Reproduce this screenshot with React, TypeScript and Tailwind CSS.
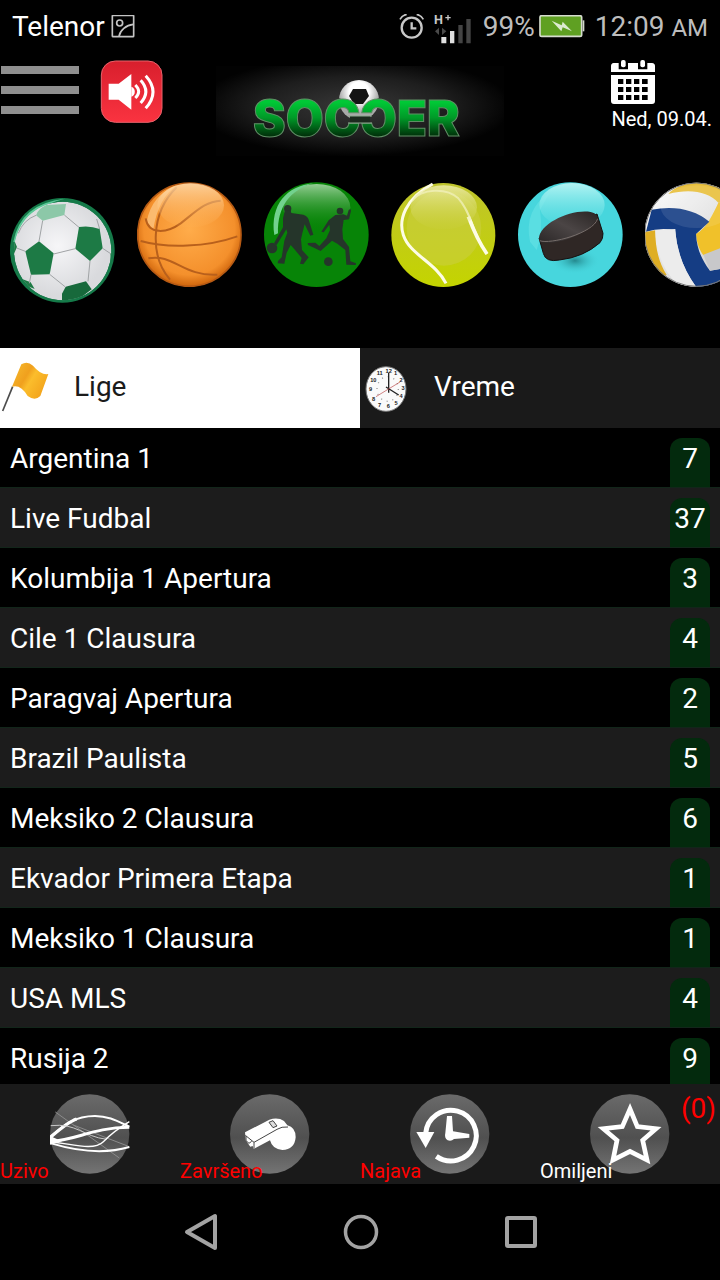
import { useState } from "react";
import type { ReactNode } from "react";

interface League {
  name: string;
  count: number;
}

const LEAGUES: League[] = [
  { name: "Argentina 1", count: 7 },
  { name: "Live Fudbal", count: 37 },
  { name: "Kolumbija 1 Apertura", count: 3 },
  { name: "Cile 1 Clausura", count: 4 },
  { name: "Paragvaj Apertura", count: 2 },
  { name: "Brazil Paulista", count: 5 },
  { name: "Meksiko 2 Clausura", count: 6 },
  { name: "Ekvador Primera Etapa", count: 1 },
  { name: "Meksiko 1 Clausura", count: 1 },
  { name: "USA MLS", count: 4 },
  { name: "Rusija 2", count: 9 },
];

// Status bar
function StatusBar() {
  return (
    <div className="flex h-[50px] shrink-0 items-center justify-between px-3 pt-1 text-[28px] leading-8">
      <div className="flex items-center gap-1.5">
        <span>Telenor</span>
        <svg viewBox="333 42 72 72" className="size-6" fill="none" stroke="#c4c4c4" strokeWidth="5">
          <rect x="337" y="43" width="64" height="64" rx="2" />
          <circle cx="359" cy="66" r="9" />
          <path d="M357 106C360 88 378 72 400 70" />
        </svg>
      </div>
      <div className="flex items-center text-[#bdbdbd]">
        <svg viewBox="58 38 78 78" className="mr-2 size-[26px]" fill="none" stroke="#c8c8c8" strokeWidth="7">
          <circle cx="96" cy="79" r="30" />
          <path d="M96 63v18h14" />
          <path d="M61 54q6-12 20-15M131 54q-6-12-20-15" strokeWidth="5" />
        </svg>
        <svg viewBox="158 12 120 102" className="mr-2.5 h-[34px] w-10 overflow-visible">
          <text x="161" y="54" fontSize="38" fontWeight="700" fill="#c8c8c8" fontFamily="Roboto, sans-serif">H</text>
          <path d="M203 27v16M195 35h16" stroke="#c8c8c8" strokeWidth="4" />
          <path d="M164 76l12-11v22zM198 76l-13-11v22z" fill="#4a4a4a" />
          <path d="M183 93h15v19h-15zM209 75h13v37h-13z" fill="#e0e0e0" />
          <path d="M234 57h13v55h-13zM258 39h13v73h-13z" fill="#444" />
        </svg>
        <span>99%</span>
        <svg viewBox="476 42 138 72" className="ml-1 h-6 w-[46px]">
          <rect x="479" y="44" width="125" height="62" rx="5" fill="#5fa022" stroke="#d5dccd" strokeWidth="5" />
          <path d="M607 58h5v33h-5z" fill="#d5dccd" />
          <path d="M514 59l30 14 3-11 28 29-28-12-4 12z" fill="#dcebd0" />
        </svg>
        <span className="ml-2.5">
          12:09 <span className="text-2xl">AM</span>
        </span>
      </div>
    </div>
  );
}

function SoccerLogo() {
  return (
    <svg viewBox="0 0 288 90" className="h-[90px] w-72" role="img" aria-label="Soccer">
      <defs>
        <radialGradient id="logoGlow" cx="0.48" cy="0.45" r="0.55">
          <stop offset="0" stopColor="#383838" />
          <stop offset="0.6" stopColor="#1e1e1e" />
          <stop offset="1" stopColor="#020202" />
        </radialGradient>
        <linearGradient id="logoText" x1="0" y1="36" x2="0" y2="71" gradientUnits="userSpaceOnUse">
          <stop offset="0" stopColor="#00c936" />
          <stop offset="0.45" stopColor="#009a28" />
          <stop offset="1" stopColor="#002b08" />
        </linearGradient>
        <radialGradient id="logoBall" cx="0.5" cy="0.3">
          <stop offset="0.5" stopColor="#fff" />
          <stop offset="1" stopColor="#a9a9a9" />
        </radialGradient>
      </defs>
      <rect width="288" height="90" fill="url(#logoGlow)" />
      <circle cx="143" cy="34" r="20" fill="url(#logoBall)" />
      <path d="M137 23h13l3 7-6 8h-9l-5-8z" fill="#141414" />
      <path d="M123 32l4 2v6h-3zM163 32l-4 2v6h3z" fill="#333" />
      <text
        x="37"
        y="70"
        fontFamily="Inter, sans-serif"
        fontWeight="900"
        fontSize="49"
        fill="url(#logoText)"
        stroke="#5f8f65"
        strokeWidth="1"
      >
        SOCƆER
      </text>
      {/* opening that joins the two C shapes */}
      <path d="M134 50h20v7h-20z" fill="#1d2a1f" />
      <path d="M132 50h24M132 57h24" stroke="#8ca88f" strokeWidth="1" />
    </svg>
  );
}

function Header() {
  return (
    <header className="grid h-[108px] shrink-0 grid-cols-[1fr_auto_1fr] items-start pt-2">
      <div className="flex items-start gap-[21px] pt-0.5">
        <button aria-label="Meni" className="flex flex-col gap-3 pt-1.5 pl-px">
          <span className="h-2 w-[78px] bg-[#8f8f8f]" />
          <span className="h-2 w-[78px] bg-[#8f8f8f]" />
          <span className="h-2 w-[78px] bg-[#8f8f8f]" />
        </button>
        <button aria-label="Zvuk">
          <svg viewBox="301 181 192 192" className="size-16">
            <defs>
              <linearGradient id="soundBg" x1="0" y1="0" x2="0" y2="1">
                <stop offset="0" stopColor="#d81f2d" />
                <stop offset="1" stopColor="#fa3340" />
              </linearGradient>
            </defs>
            <rect x="305" y="184" width="182" height="184" rx="42" fill="url(#soundBg)" stroke="#e8626b" strokeWidth="3" />
            <path d="M327 252h30l38-29v107l-38-30h-30z" fill="#fff" />
            <path d="M395 261a16 16 0 0 1 0 30z" fill="#fff" />
            <g fill="none" stroke="#fff" strokeWidth="9">
              <path d="M407 256q20 20 0 39" />
              <path d="M423 242q31 34 0 68" />
              <path d="M438 228q44 48 0 98" />
            </g>
          </svg>
        </button>
      </div>
      <div className="pt-2">
        <SoccerLogo />
      </div>
      <button className="flex flex-col items-start justify-self-end pt-0.5 pr-2 text-xl leading-6">
        <svg viewBox="693 180 132 132" className="mb-[3px] size-11" fill="#fff">
          <path d="M693 216v-18q0-8 8-9h15v19h28v-19h30v19h28v-19h14q9 1 9 9v18z" />
          <rect x="723" y="180" width="14" height="22" rx="6" />
          <rect x="781" y="180" width="14" height="22" rx="6" />
          <path
            fillRule="evenodd"
            d="M693 225h132v78q0 9-9 9H702q-9 0-9-9zM714 237v15h16v-15zM738 237v15h16v-15zM762 237v15h16v-15zM786 237v15h17v-15zM714 261v15h16v-15zM738 261v15h16v-15zM762 261v15h16v-15zM786 261v15h17v-15zM714 285v15h16v-15zM738 285v15h16v-15zM762 285v15h16v-15zM786 285v15h17v-15z"
          />
        </svg>
        Ned, 09.04.
      </button>
    </header>
  );
}

function FootballIcon() {
  return (
    <svg viewBox="30 84 315 315" className="size-[105px]">
      <defs>
        <radialGradient id="fbWhite" cx="0.45" cy="0.45">
          <stop offset="0" stopColor="#f6f6f8" />
          <stop offset="1" stopColor="#d9dadd" />
        </radialGradient>
        <clipPath id="fbClip">
          <ellipse cx="188" cy="243" rx="146" ry="148" />
        </clipPath>
      </defs>
      <circle cx="187" cy="241" r="157" fill="#157a49" />
      <path d="M40 215Q62 100 195 86Q75 112 52 220z" fill="#5cc998" />
      <g clipPath="url(#fbClip)">
        <ellipse cx="188" cy="243" rx="146" ry="148" fill="url(#fbWhite)" />
        <path d="M108 136Q115 115 139 105L198 102L193 135L128 152z" fill="#8cc8a8" />
        <path d="M237 171Q270 166 299 177L308 235L270 273L226 236z" fill="#1d7a45" />
        <path d="M76 244L117 214L161 250L149 313L93 314z" fill="#1d7a45" />
        <path d="M186 371L197 350L258 334L275 358L232 391L186 391z" fill="#17693b" />
        <path d="M36 195l15 36-9 20zM331 250l14 0-12 35zM60 325l32 12 12 20-30-12z" fill="#1d7a45" />
        <path
          d="M193 135l44 37M128 152l-11 62M226 236l-65 16M149 313l46 37M270 273l-6 61M299 177l-9-30M308 235l24 16M76 244l-26-10M93 314l-5 26M55 190Q70 150 108 136"
          fill="none"
          stroke="#a0a3a5"
          strokeWidth="3"
        />
      </g>
    </svg>
  );
}

function BasketballIcon() {
  return (
    <svg viewBox="411 36 315 315" className="size-[105px]">
      <defs>
        <radialGradient id="bbFill" cx="0.5" cy="0.45" r="0.55">
          <stop offset="0" stopColor="#ffac4a" />
          <stop offset="0.8" stopColor="#f4902c" />
          <stop offset="1" stopColor="#cf650c" />
        </radialGradient>
        <linearGradient id="bbShine" x1="0" y1="0" x2="0" y2="1">
          <stop offset="0" stopColor="#ffe0b5" stopOpacity="0.8" />
          <stop offset="1" stopColor="#ffb55c" stopOpacity="0.1" />
        </linearGradient>
      </defs>
      <circle cx="568" cy="194" r="155" fill="url(#bbFill)" stroke="#b65a14" strokeWidth="5" />
      <path d="M440 155Q455 75 530 46Q475 85 460 178z" fill="#ffd49a" opacity="0.6" />
      <g fill="none" stroke="#b8601c" strokeWidth="6">
        <path d="M422 213C500 235 620 232 712 199" />
        <path d="M530 52C450 130 450 260 510 329" />
        <path d="M437 145C445 195 500 190 542 160C590 123 615 95 662 92" />
        <path d="M445 265C520 250 550 320 652 314" />
      </g>
      <ellipse cx="572" cy="106" rx="100" ry="66" fill="url(#bbShine)" />
    </svg>
  );
}

function FutsalIcon() {
  return (
    <svg viewBox="42 36 315 315" className="size-[105px]">
      <defs>
        <linearGradient id="fsShine" x1="0" y1="0" x2="0" y2="1">
          <stop offset="0" stopColor="#a5d6a5" stopOpacity="0.9" />
          <stop offset="1" stopColor="#078407" stopOpacity="0" />
        </linearGradient>
      </defs>
      <circle cx="199" cy="194" r="157" fill="#078407" />
      <ellipse cx="200" cy="112" rx="101" ry="70" fill="url(#fsShine)" />
      <path d="M73 195C60 105 110 48 190 40C120 60 82 110 84 190z" fill="#72d28e" />
      <g fill="#25352a">
        <circle cx="113" cy="116" r="11" />
        <path d="M104 124L122 121L124 129L160 134Q174 139 177 152L190 194L181 197L164 163L157 190L153 208L156 240L176 262L160 283L150 281L155 264L132 236L122 225L110 248L103 281L83 280L84 273L95 262L103 212L112 188L109 178L98 196L80 225L72 220L99 172L99 145z" />
        <circle cx="66" cy="234" r="16" />
        <circle cx="270" cy="123" r="10" />
        <path d="M256 135L280 133L291 137L296 120L301 117L303 122L297 148L281 150L277 178L279 207L297 231L301 274L318 280L317 285L289 284L286 240L262 221L246 212L212 243L195 235L174 225L173 219L196 218L208 228L229 205L240 180L238 164L221 187L214 185L236 151z" />
        <circle cx="235" cy="275" r="13" />
      </g>
    </svg>
  );
}

function TennisIcon() {
  return (
    <svg viewBox="423 36 315 315" className="size-[105px]">
      <defs>
        <linearGradient id="tnFill" x1="0" y1="0" x2="0" y2="1">
          <stop offset="0" stopColor="#bfc42c" />
          <stop offset="1" stopColor="#c4d400" />
        </linearGradient>
        <linearGradient id="tnShine" x1="0" y1="0" x2="0" y2="1">
          <stop offset="0" stopColor="#f1efb5" stopOpacity="0.8" />
          <stop offset="1" stopColor="#cdd14a" stopOpacity="0.1" />
        </linearGradient>
      </defs>
      <circle cx="580" cy="195" r="156" fill="url(#tnFill)" />
      <circle cx="582" cy="175" r="112" fill="#c9cf3e" opacity="0.6" />
      <g fill="none" stroke="#fdfce6">
        <path d="M548 42C465 85 445 150 460 195C480 255 555 275 588 340" strokeWidth="9" />
        <path d="M485 92C515 55 590 52 625 85C665 128 665 185 711 252" strokeWidth="6" opacity="0.8" />
        <path d="M655 140C670 180 685 215 711 252" strokeWidth="11" />
      </g>
      <ellipse cx="581" cy="112" rx="100" ry="66" fill="url(#tnShine)" />
    </svg>
  );
}

function HockeyIcon() {
  return (
    <svg viewBox="54 36 315 315" className="size-[105px]">
      <defs>
        <linearGradient id="hkShine" x1="0" y1="0" x2="0" y2="1">
          <stop offset="0" stopColor="#b4f3f3" />
          <stop offset="1" stopColor="#5ee0e3" stopOpacity="0.2" />
        </linearGradient>
        <radialGradient id="hkShadow">
          <stop offset="0" stopColor="#15696d" stopOpacity="0.7" />
          <stop offset="1" stopColor="#47d6dd" stopOpacity="0" />
        </radialGradient>
        <linearGradient id="hkTop" x1="0" y1="1" x2="1" y2="0">
          <stop offset="0" stopColor="#2b2727" />
          <stop offset="0.5" stopColor="#4b4545" />
          <stop offset="1" stopColor="#2a2524" />
        </linearGradient>
      </defs>
      <circle cx="211" cy="194" r="157" fill="#47d6dd" />
      <path d="M90 215Q70 120 150 66L120 120Q130 190 110 240z" fill="#68e3e6" opacity="0.6" />
      <ellipse cx="216" cy="105" rx="98" ry="66" fill="url(#hkShine)" />
      <ellipse cx="225" cy="272" rx="75" ry="40" fill="url(#hkShadow)" />
      <path d="M117 204L130 250Q137 278 178 270Q250 262 300 218Q310 206 309 190L291 132z" fill="#2f2725" stroke="#151111" strokeWidth="3" />
      <path d="M117 206C118 160 215 116 272 126C315 135 275 178 220 200C170 221 118 226 117 206z" fill="url(#hkTop)" />
      <path d="M119 212C150 224 280 190 293 146" fill="none" stroke="#766d6a" strokeWidth="3" />
    </svg>
  );
}

function VolleyballIcon() {
  return (
    <svg viewBox="435 36 315 315" className="size-[105px]">
      <defs>
        <clipPath id="vbClip">
          <circle cx="589" cy="194" r="156" />
        </clipPath>
        <linearGradient id="vbWhite" x1="0" y1="0" x2="1" y2="1">
          <stop offset="0" stopColor="#fff" />
          <stop offset="1" stopColor="#c4c4c4" />
        </linearGradient>
      </defs>
      <g clipPath="url(#vbClip)">
        <path d="M430 30h330v330H430z" fill="url(#vbWhite)" />
        <path d="M505 72C540 32 640 20 760 60V110L655 98C625 65 570 55 505 72z" fill="#e8bf3a" />
        <path d="M655 98L760 90V230L610 256C595 235 590 215 588 192C620 175 640 130 655 98z" fill="#f0c12a" />
        <path d="M438 185L455 119Q560 100 628 155L588 192C590 235 605 270 630 302L700 290V350H588Q535 280 525 180Q480 172 438 185z" fill="#153d84" />
        <path d="M610 254L700 220V290L630 302z" fill="#c8c8ca" />
        <path d="M436 186L466 181Q465 260 500 315L480 320Q430 260 436 186z" fill="#dfae24" />
        <path d="M466 181l60-4Q530 270 588 350H540Q470 290 466 181z" fill="#ececec" />
        <ellipse cx="590" cy="110" rx="108" ry="64" fill="#fff" opacity="0.1" />
      </g>
      <circle cx="589" cy="194" r="155" fill="none" stroke="#777" strokeWidth="3" />
    </svg>
  );
}

const SPORTS: { label: string; icon: ReactNode }[] = [
  { label: "Fudbal", icon: <FootballIcon /> },
  { label: "Košarka", icon: <BasketballIcon /> },
  { label: "Futsal", icon: <FutsalIcon /> },
  { label: "Tenis", icon: <TennisIcon /> },
  { label: "Hokej", icon: <HockeyIcon /> },
  { label: "Odbojka", icon: <VolleyballIcon /> },
];

function FlagIcon() {
  return (
    <svg viewBox="0 66 150 156" className="h-[52px] w-[50px]">
      <defs>
        <linearGradient id="flagFill" x1="0" y1="0" x2="1" y2="0.6">
          <stop offset="0" stopColor="#f7bd2e" />
          <stop offset="0.45" stopColor="#f0a01e" />
          <stop offset="0.6" stopColor="#fbbd2c" />
          <stop offset="1" stopColor="#f3a41c" />
        </linearGradient>
      </defs>
      <path d="M8 213L38 140" stroke="#4c4c4c" strokeWidth="5" />
      <path d="M36 140L64 73Q82 62 99 77Q123 106 145 102L121 168Q105 184 83 168Q62 132 36 140z" fill="url(#flagFill)" />
    </svg>
  );
}

function ClockIcon() {
  const numbers = [
    ["12", 116, 98], ["1", 137, 106], ["2", 153, 126], ["3", 159, 150],
    ["4", 153, 175], ["5", 138, 195], ["6", 115, 204], ["7", 89, 201],
    ["8", 71, 182], ["9", 62, 153], ["10", 70, 125], ["11", 89, 105],
  ] as const;
  return (
    <svg viewBox="30 66 150 156" className="h-[52px] w-[50px]" aria-hidden="true">
      <ellipse cx="108" cy="147" rx="60" ry="67" fill="#fafafa" stroke="#777" strokeWidth="3" />
      <g fontSize="17" fontWeight="700" fontFamily="Liberation Sans, sans-serif" fill="#222" textAnchor="middle">
        {numbers.map(([n, x, y]) => (
          <text key={n} x={x} y={y}>{n}</text>
        ))}
      </g>
      <ellipse cx="113" cy="147" rx="32" ry="37" fill="none" stroke="#999" strokeWidth="4" strokeDasharray="3 15" />
      <path d="M116 158V98M108 141l38 24" stroke="#222" strokeWidth="4" />
      <path d="M78 170l72-44" stroke="#b44" strokeWidth="2" />
    </svg>
  );
}

// Grey disc shared by the bottom menu icons
function Disc({ id, x }: { id: string; x: number }) {
  return (
    <>
      <defs>
        <linearGradient id={id} x1="0" y1="0" x2="0" y2="1">
          <stop offset="0" stopColor="#6a6a6a" />
          <stop offset="0.55" stopColor="#505050" />
          <stop offset="1" stopColor="#747474" />
        </linearGradient>
      </defs>
      <circle cx={x} cy="162" r="119" fill={`url(#${id})`} />
    </>
  );
}

function LiveIcon() {
  return (
    <svg viewBox="150 42 240 240" className="size-20">
      <Disc id="discLive" x={269} />
      <g fill="none" stroke="#fff">
        <path d="M166 96L358 234M220 135L388 200" stroke="#8b8b8b" strokeWidth="3" />
        <path d="M151 172C190 135 225 108 285 108C330 108 360 128 388 140" strokeWidth="6" />
        <path d="M151 172C180 147 205 125 230 117" strokeWidth="10" />
        <path d="M152 137C230 128 250 170 320 178" stroke="#c8c8c8" strokeWidth="3" />
        <path d="M154 184C230 180 280 142 388 142" strokeWidth="9" />
        <path d="M154 186C210 190 280 215 310 185C335 160 355 145 388 125" strokeWidth="4" />
        <path d="M154 190C220 210 310 224 388 201" strokeWidth="6" />
      </g>
      <path d="M150 168l36 16-36 10z" fill="#fff" />
    </svg>
  );
}

function WhistleIcon() {
  return (
    <svg viewBox="690 42 240 240" className="size-20">
      <Disc id="discWhistle" x={809} />
      <path d="M735 157L808 119Q834 111 852 123L862 136Q887 142 887 172Q884 209 847 210Q817 208 810 181L761 207L758 198L751 200L737 181z" fill="#fff" />
      <path d="M736 166L762 187L831 148Q845 139 864 141M762 187v19M738 168v14l9 8 8-6" fill="none" stroke="#444" strokeWidth="3" />
      <path d="M807 127l12-5 12 16-12 5z" fill="#ddd" stroke="#444" strokeWidth="3" />
    </svg>
  );
}

function HistoryIcon() {
  return (
    <svg viewBox="150 42 240 240" className="size-20">
      <Disc id="discHistory" x={269} />
      <path d="M197 160A76 76 0 1 1 229 229" fill="none" stroke="#fff" strokeWidth="15" />
      <path d="M169 156h54l-26 48z" fill="#fff" />
      <path d="M261 108h15l3 46 49 8v11l-46 4q-8 8-19 4-11-7-7-22z" fill="#fff" />
    </svg>
  );
}

function StarIcon() {
  return (
    <svg viewBox="690 42 240 240" className="size-20">
      <Disc id="discStar" x={809} />
      <path
        d="M810 87L832 140L888 146L848 181L861 240L810 214L759 240L771 181L730 146L787 140z"
        fill="none"
        stroke="#fff"
        strokeWidth="14"
      />
    </svg>
  );
}

const MENU = [
  { label: "Uzivo", icon: <LiveIcon />, color: "text-[#ff0000]" },
  { label: "Završeno", icon: <WhistleIcon />, color: "text-[#ff0000]" },
  { label: "Najava", icon: <HistoryIcon />, color: "text-[#ff0000]" },
  { label: "Omiljeni", icon: <StarIcon />, color: "text-white", badge: "(0)" },
];

function SystemNav() {
  return (
    <nav className="flex h-24 shrink-0 items-center justify-center gap-[120px]" aria-label="Sistem">
      <button aria-label="Nazad">
        <svg viewBox="0 0 40 40" className="size-10" fill="none" stroke="#a3a3a3" strokeWidth="4" strokeLinejoin="round">
          <path d="M35 4v32L7 20z" />
        </svg>
      </button>
      <button aria-label="Početna">
        <svg viewBox="0 0 40 40" className="size-10" fill="none" stroke="#a3a3a3" strokeWidth="3.5">
          <circle cx="21" cy="20" r="15.5" />
        </svg>
      </button>
      <button aria-label="Nedavno">
        <svg viewBox="0 0 40 40" className="size-10" fill="none" stroke="#a3a3a3" strokeWidth="4">
          <rect x="7" y="6" width="28" height="28" rx="1" />
        </svg>
      </button>
    </nav>
  );
}

export default function App() {
  const [tab, setTab] = useState("lige");

  const tabClass = (name: string) =>
    tab === name ? "bg-white text-[#1b1b1b]" : "bg-[#1a1a1a] text-white";

  return (
    <div className="flex h-screen flex-col overflow-hidden bg-black font-[Roboto,sans-serif] text-white">
      <StatusBar />
      <Header />

      {/* Sports */}
      <div className="flex h-[190px] shrink-0 items-start gap-[22px] overflow-hidden pt-6 pl-2.5">
        {SPORTS.map((sport) => (
          <button key={sport.label} aria-label={sport.label} className="shrink-0 first:mt-4">
            {sport.icon}
          </button>
        ))}
      </div>

      {/* Tabs */}
      <div className="grid h-20 shrink-0 grid-cols-2 text-[28px]">
        <button onClick={() => setTab("lige")} className={`flex items-center gap-6 ${tabClass("lige")}`}>
          <FlagIcon />
          <span className="pb-0.5">Lige</span>
        </button>
        <button onClick={() => setTab("vreme")} className={`flex items-center gap-6 ${tabClass("vreme")}`}>
          <ClockIcon />
          <span className="pb-0.5">Vreme</span>
        </button>
      </div>

      {/* Leagues */}
      <ul className="min-h-0 flex-1 overflow-hidden text-[28px] leading-[42px]">
        {LEAGUES.map((league) => (
          <li
            key={league.name}
            className="flex h-[60px] justify-between border-b border-[#12261a] px-2.5 pt-2.5 even:bg-[#1c1c1c]"
          >
            <span>{league.name}</span>
            <span className="w-10 rounded-t-xl bg-[#032a0d] text-center">{league.count}</span>
          </li>
        ))}
      </ul>

      {/* Bottom menu */}
      <nav className="grid h-[100px] shrink-0 grid-cols-4 bg-[#1a1a1a]">
        {MENU.map((item) => (
          <button key={item.label} className="relative flex items-center justify-center">
            {item.icon}
            <span className={`absolute bottom-0 left-0 text-xl leading-[26px] ${item.color}`}>{item.label}</span>
            {item.badge && (
              <span className="absolute top-1 right-1 text-[28px] leading-[42px] text-[#ff0000]">{item.badge}</span>
            )}
          </button>
        ))}
      </nav>

      <SystemNav />
    </div>
  );
}
